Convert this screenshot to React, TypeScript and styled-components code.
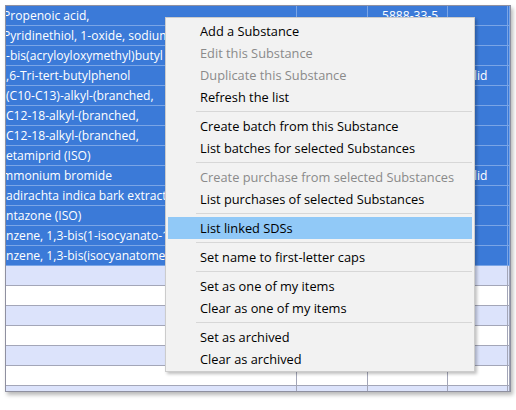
import React from "react";
import styled, { createGlobalStyle } from "styled-components";

const GlobalStyle = createGlobalStyle`
  html, body {
    margin: 0;
    padding: 0;
    background: #ffffff;
  }
  body {
    font-family: "Open Sans", "Noto Sans", "DejaVu Sans", sans-serif;
    font-size: 12.8px;
  }
`;

const Page = styled.div`
  position: relative;
  width: 516px;
  height: 410px;
  padding: 5px;
  box-sizing: border-box;
`;

const Grid = styled.div`
  width: 506px;
  height: 387px;
  box-sizing: border-box;
  border: 1px solid #8f90a0;
  overflow: hidden;
  background: #ffffff;
  font-size: 12.1px;
  box-shadow: 2px 3px 4px rgba(0, 0, 0, 0.28);
`;

const Row = styled.div<{ $selected?: boolean; $alt?: boolean }>`
  display: grid;
  grid-template-columns: 291px 71px 80px 60px 2px;
  height: 20px;
  box-sizing: border-box;
  border-bottom: 1px solid ${(p) => (p.$selected ? "#7aa5e6" : "#a3a6b8")};
  background: ${(p) => (p.$selected ? "#3b7ad8" : p.$alt ? "#dce3fb" : "#ffffff")};
  color: ${(p) => (p.$selected ? "#ffffff" : "#000000")};
`;

const Cell = styled.div<{ $selected?: boolean; $pad?: number }>`
  box-sizing: border-box;
  border-right: 1px solid ${(p) => (p.$selected ? "#7aa5e6" : "#a3a6b8")};
  overflow: hidden;
  white-space: nowrap;
  line-height: 19px;
  padding-left: ${(p) => p.$pad ?? 0}px;
`;

const CellText = styled.span<{ $shift: number }>`
  display: inline-block;
  margin-left: ${(p) => p.$shift}px;
`;

const Menu = styled.div`
  position: absolute;
  left: 165px;
  top: 17px;
  width: 310px;
  box-sizing: border-box;
  padding: 2px 2px 1px 2px;
  background: #f2f2f2;
  border: 1px solid #cccccc;
  box-shadow: 2px 2px 3px rgba(0, 0, 0, 0.25);
  color: #000000;
`;

const Item = styled.div<{ $disabled?: boolean; $active?: boolean }>`
  height: 22px;
  line-height: 22px;
  padding-left: 32px;
  white-space: nowrap;
  color: ${(p) => (p.$disabled ? "#8a8a8a" : "#000000")};
  background: ${(p) => (p.$active ? "#91c9f7" : "transparent")};
`;

const Separator = styled.div`
  height: 7px;
  display: flex;
  align-items: center;
  padding-left: 28px;

  &::after {
    content: "";
    flex: 1;
    height: 1px;
    background: #d7d7d7;
  }
`;

type GridRow = {
  name?: string;
  shift?: number;
  cas?: string;
  state?: string;
};

const rows: GridRow[] = [
  { name: "Propenoic acid,", shift: -3, cas: "5888-33-5" },
  { name: "Pyridinethiol, 1-oxide, sodium salt", shift: -3 },
  { name: "-bis(acryloyloxymethyl)butyl acrylate", shift: 0 },
  { name: ",6-Tri-tert-butylphenol", shift: 0, state: "Solid" },
  { name: "(C10-C13)-alkyl-(branched,", shift: 0 },
  { name: "C12-18-alkyl-(branched,", shift: 0 },
  { name: "C12-18-alkyl-(branched,", shift: 0 },
  { name: "etamiprid (ISO)", shift: 0 },
  { name: "mmonium bromide", shift: -4, state: "Solid" },
  { name: "adirachta indica bark extract", shift: 0 },
  { name: "ntazone (ISO)", shift: 0 },
  { name: "nzene, 1,3-bis(1-isocyanato-1-methylethyl)", shift: 0 },
  { name: "nzene, 1,3-bis(isocyanatomethyl)", shift: 0 },
  {}, {}, {}, {}, {}, {}, {},
];

type MenuEntry = { label: string; disabled?: boolean; active?: boolean } | "sep";

const menu: MenuEntry[] = [
  { label: "Add a Substance" },
  { label: "Edit this Substance", disabled: true },
  { label: "Duplicate this Substance", disabled: true },
  { label: "Refresh the list" },
  "sep",
  { label: "Create batch from this Substance" },
  { label: "List batches for selected Substances" },
  "sep",
  { label: "Create purchase from selected Substances", disabled: true },
  { label: "List purchases of selected Substances" },
  "sep",
  { label: "List linked SDSs", active: true },
  "sep",
  { label: "Set name to first-letter caps" },
  "sep",
  { label: "Set as one of my items" },
  { label: "Clear as one of my items" },
  "sep",
  { label: "Set as archived" },
  { label: "Clear as archived" },
];

export default function App() {
  return (
    <>
      <GlobalStyle />
      <Page>
        <Grid>
          {rows.map((r, i) => {
            const selected = i < 13;
            return (
              <Row key={i} $selected={selected} $alt={!selected && i % 2 === 1}>
                <Cell $selected={selected}>
                  {r.name && <CellText $shift={r.shift ?? 0}>{r.name}</CellText>}
                </Cell>
                <Cell $selected={selected} />
                <Cell $selected={selected} $pad={14}>
                  {r.cas}
                </Cell>
                <Cell $selected={selected} $pad={12}>
                  {r.state}
                </Cell>
                <Cell $selected={selected} />
              </Row>
            );
          })}
        </Grid>
        <Menu>
          {menu.map((m, i) =>
            m === "sep" ? (
              <Separator key={i} />
            ) : (
              <Item key={i} $disabled={m.disabled} $active={m.active}>
                {m.label}
              </Item>
            )
          )}
        </Menu>
      </Page>
    </>
  );
}
